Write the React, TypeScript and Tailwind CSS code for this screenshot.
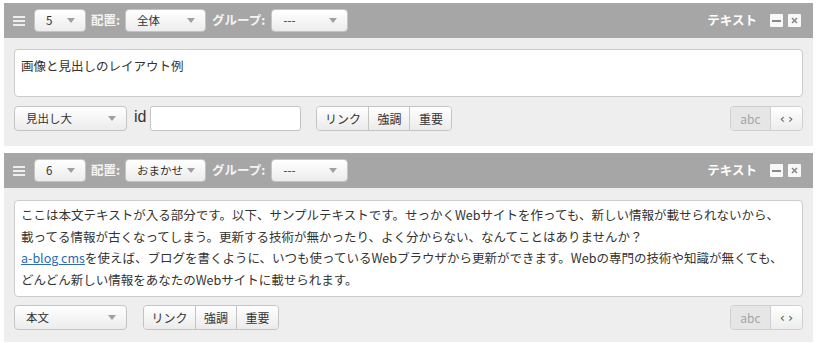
import React from 'react';

const Arrow = () => (
  <svg width="8" height="5" viewBox="0 0 8 5" className="shrink-0">
    <path d="M0 0 H8 L4 5 Z" fill="#a0a0a0" />
  </svg>
);

const Select: React.FC<{ label: string; w: string; h?: string }> = ({ label, w, h = 'h-[23px]' }) => (
  <div
    className={`${w} ${h} flex items-center justify-between pl-[11px] pr-[10px] rounded-[4px] border border-[#c4c4c4] bg-gradient-to-b from-[#ffffff] to-[#ececec] text-[11.5px] text-[#333]`}
  >
    <span>{label}</span>
    <Arrow />
  </div>
);

const HeaderBar: React.FC<{ num: string; place: string }> = ({ num, place }) => (
  <div className="h-[35px] bg-[#a6a6a6] flex items-center pl-[9px] pr-[12px]">
    <svg width="12" height="10" viewBox="0 0 12 10" className="mr-[9px]">
      <rect x="0" y="0" width="12" height="2" fill="#eeeeee" />
      <rect x="0" y="4" width="12" height="2" fill="#eeeeee" />
      <rect x="0" y="8" width="12" height="2" fill="#eeeeee" />
    </svg>
    <Select label={num} w="w-[52px]" />
    <span className="ml-[5px] mr-[5px] text-[12.5px] font-bold text-[#f4f4f4]">配置:</span>
    <Select label={place} w="w-[81px]" />
    <span className="ml-[6px] mr-[6px] text-[12.5px] font-bold text-[#f4f4f4]">グループ:</span>
    <Select label="---" w="w-[77px]" />
    <div className="flex-1" />
    <span className="text-[12.5px] font-bold text-white mr-[13px]">テキスト</span>
    <div className="w-[13px] h-[13px] bg-[#f8f8f8] rounded-[1px] flex items-center justify-center mr-[5px]">
      <div className="w-[9px] h-[2px] bg-[#888]" />
    </div>
    <div className="w-[13px] h-[13px] bg-[#f8f8f8] rounded-[1px] flex items-center justify-center">
      <svg width="7" height="7" viewBox="0 0 7 7">
        <path d="M1 1 L6 6 M6 1 L1 6" stroke="#888" strokeWidth="1.6" />
      </svg>
    </div>
  </div>
);

const Btn: React.FC<{ label: string; cls?: string; last?: boolean }> = ({ label, cls = '', last }) => (
  <div
    className={`h-full flex items-center justify-center bg-gradient-to-b from-[#ffffff] to-[#ebebeb] text-[12px] text-[#333] ${last ? '' : 'border-r border-[#c4c4c4]'} ${cls}`}
  >
    {label}
  </div>
);

const BtnGroup = () => (
  <div className="h-[25px] flex rounded-[4px] border border-[#c4c4c4] overflow-hidden">
    <Btn label="リンク" cls="w-[52px]" />
    <Btn label="強調" cls="w-[41px]" />
    <Btn label="重要" cls="w-[41px]" last />
  </div>
);

const ModeGroup = () => (
  <div className="h-[25px] flex rounded-[4px] border border-[#cfcfcf] overflow-hidden ml-auto">
    <div className="w-[40px] h-full flex items-center justify-center bg-[#e6e6e6] text-[12px] text-[#a5a5a5] border-r border-[#cfcfcf]">
      abc
    </div>
    <div className="w-[31px] h-full flex items-center justify-center gap-[3px] bg-gradient-to-b from-[#ffffff] to-[#ededed] text-[13px] leading-none text-[#555] font-['DejaVu_Sans',sans-serif]">
      <span>‹</span>
      <span>›</span>
    </div>
  </div>
);

export default function App() {
  return (
    <div className="w-[818px] h-[343px] bg-white pl-[4px] pr-[5px] pt-[3px] font-['Noto_Sans_CJK_JP',sans-serif] overflow-hidden">
      {/* unit 5 */}
      <div>
        <HeaderBar num="5" place="全体" />
        <div className="bg-[#eeeeee] px-[10px] pt-[11px] pb-[15px]">
          <div className="h-[48px] bg-white border border-[#cccccc] rounded-[4px] px-[6px] pt-[5px] text-[12.5px] leading-[21.5px] text-[#333]">
            画像と見出しのレイアウト例
          </div>
          <div className="flex items-center mt-[9px]">
            <Select label="見出し大" w="w-[113px]" h="h-[25px]" />
            <span className="ml-[7px] mr-[4px] text-[16px] leading-none text-[#333] font-['Liberation_Sans',sans-serif] -mt-[3px]">id</span>
            <div className="w-[151px] h-[25px] bg-white border border-[#c4c4c4] rounded-[3px]" />
            <div className="ml-[15px]">
              <BtnGroup />
            </div>
            <ModeGroup />
          </div>
        </div>
      </div>

      {/* unit 6 */}
      <div className="mt-[7px]">
        <HeaderBar num="6" place="おまかせ" />
        <div className="bg-[#eeeeee] px-[10px] pt-[12px] pb-[12px]">
          <div className="h-[97px] bg-white border border-[#cccccc] rounded-[4px] px-[6px] pt-[3px] text-[12.5px] leading-[21.5px] text-[#333] whitespace-nowrap">
            ここは本文テキストが入る部分です。以下、サンプルテキストです。せっかくWebサイトを作っても、新しい情報が載せられないから、
            <br />
            載ってる情報が古くなってしまう。更新する技術が無かったり、よく分からない、なんてことはありませんか？
            <br />
            <span className="text-[#2a6cb6] underline">a-blog cms</span>を使えば、ブログを書くように、いつも使っているWebブラウザから更新ができます。Webの専門の技術や知識が無くても、
            <br />
            どんどん新しい情報をあなたのWebサイトに載せられます。
          </div>
          <div className="flex items-center mt-[8px]">
            <Select label="本文" w="w-[113px]" h="h-[25px]" />
            <div className="ml-[16px]">
              <BtnGroup />
            </div>
            <ModeGroup />
          </div>
        </div>
      </div>
    </div>
  );
}
